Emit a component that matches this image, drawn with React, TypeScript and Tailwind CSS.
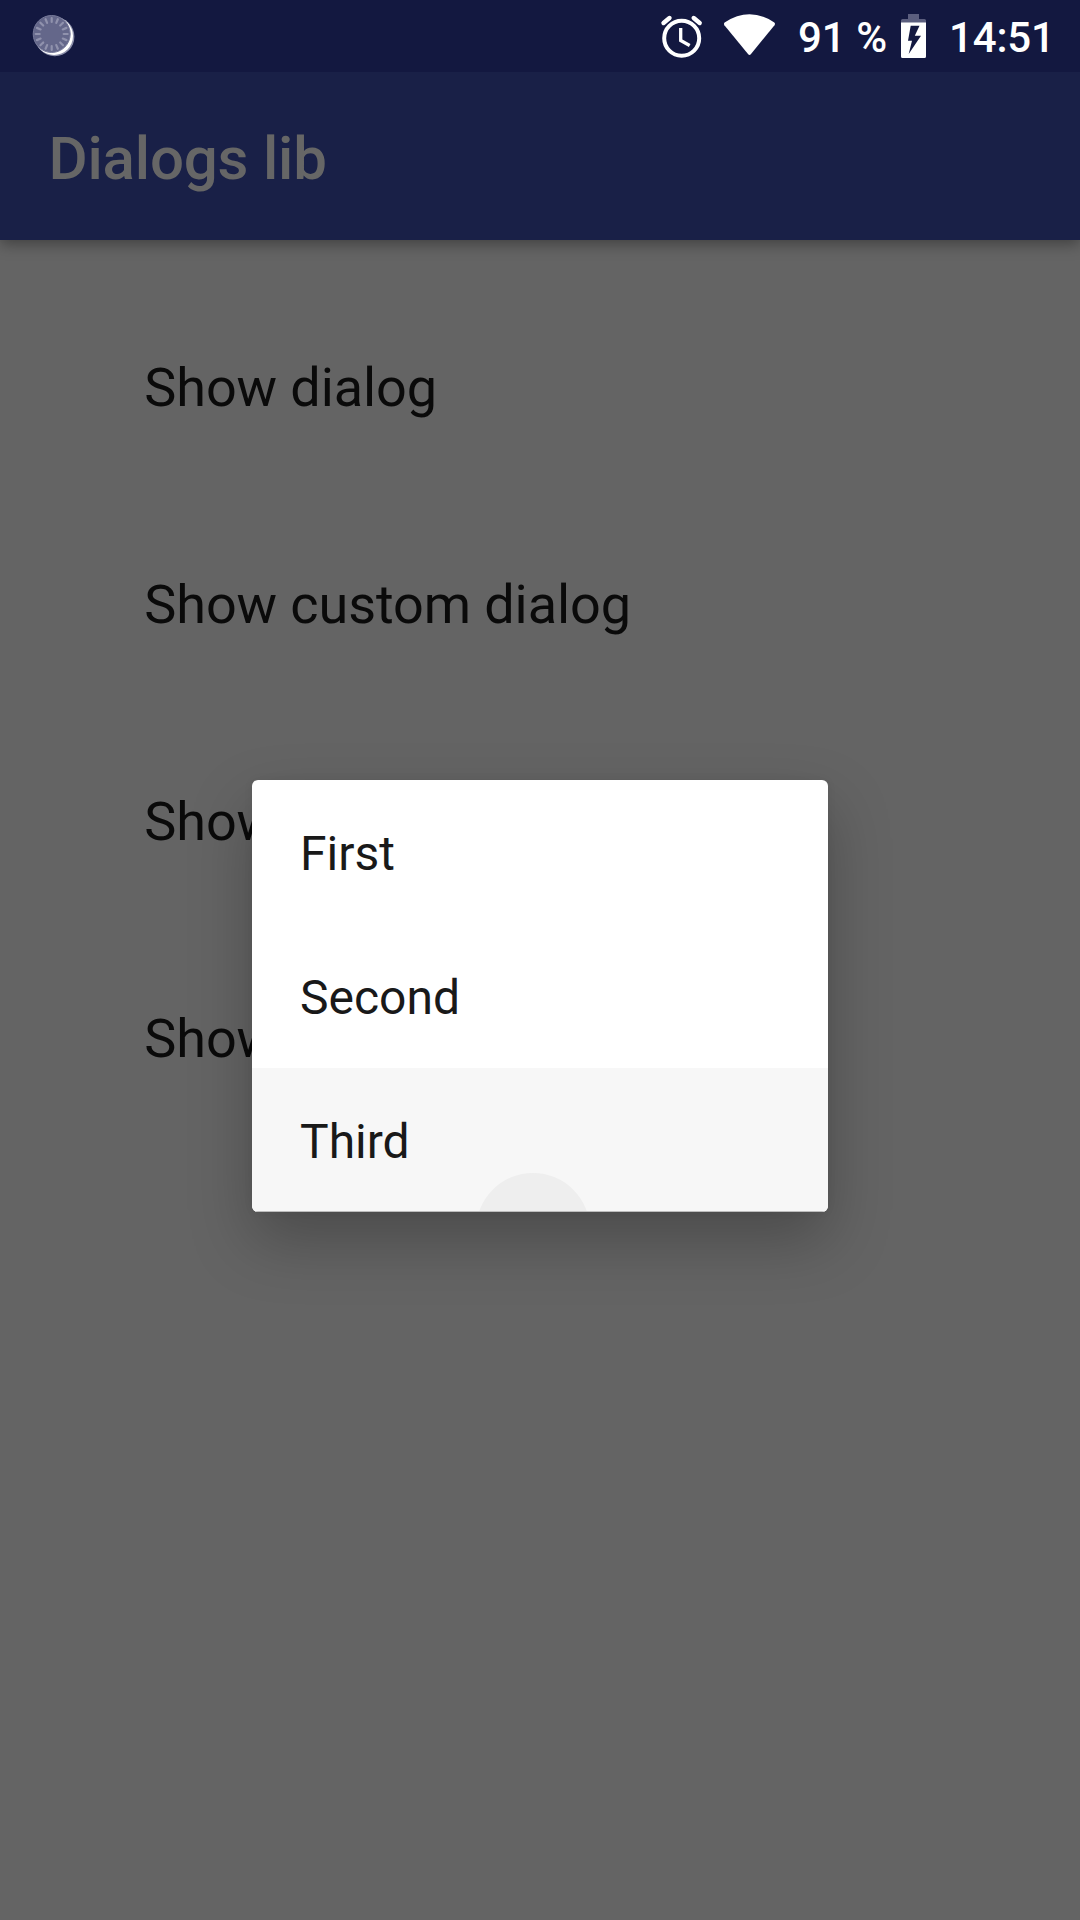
const ticks = Array.from({ length: 16 }, (_, i) => i * 22.5);
const actions = ["Show dialog", "Show custom dialog", "Show", "Show"];

function SyncIcon() {
  return (
    <svg className="ml-8 h-[72px] w-12 shrink-0" viewBox="32 0 48 72">
      <circle cx="54.8" cy="36.7" r="19.6" fill="#8d90ab" />
      <circle cx="54" cy="36" r="19" fill="#fff" />
      <circle cx="51.7" cy="34" r="18.5" fill="#64678a" stroke="#777a9a" />
      {ticks.map((a) => (
        <path key={a} d="M51.7 18v4" stroke="#9092ad" strokeWidth="2.2" strokeLinecap="round" transform={`rotate(${a} 51.7 34)`} />
      ))}
    </svg>
  );
}

function StatusIcons() {
  return (
    <svg className="h-[72px] w-[125px] shrink-0" viewBox="655 0 125 72">
      <circle cx="681.7" cy="38.3" r="17.5" fill="none" stroke="#fff" strokeWidth="4" />
      <path d="M663.5 23l6-5M693.7 18l6 5" stroke="#fff" strokeWidth="4.4" strokeLinecap="round" />
      <path d="M680.7 28v12.5l9 5" fill="none" stroke="#fff" strokeWidth="3.3" />
      <path d="M724.6 22.4Q749.5 6 774.3 22.4Q775.6 23.5 774.5 25.2L751 54Q749.5 55.8 748 54L724.4 25.2Q723.4 23.5 724.6 22.4Z" fill="#fff" />
    </svg>
  );
}

function BatteryIcon() {
  return (
    <svg className="h-[72px] w-[26px] shrink-0" viewBox="901 0 26 72">
      <path d="M908 14h11v5h5.5q1.5 0 1.5 1.5V23h-25v-2.500q0-1.500 1.500-1.500H908z" fill="#5b5e7e" />
      <path fillRule="evenodd" d="M901 22.500h25V56.500q0 1.500-1.500 1.500h-22q-1.500 0-1.500-1.500zM910.7 25.700L908 40.700h4l-3.300 13.300L921 35.700h-6.200l4.700-10z" fill="#fff" />
    </svg>
  );
}

export default function App() {
  return (
    <div className="relative h-[1920px] w-[1080px] overflow-hidden bg-[#646464] font-[Roboto,sans-serif]">
      <header className="relative flex h-60 flex-col bg-[#192047] shadow-[0_4px_14px_rgba(0,0,0,0.36)]">
        <div className="flex h-[72px] items-center bg-[#131840] text-[42px] leading-[72px] font-medium text-white">
          <SyncIcon />
          <div className="ml-[575px] flex">
            <StatusIcons />
          </div>
          <span className="ml-[18px] w-[103px] pt-1 whitespace-nowrap">91 %</span>
          <BatteryIcon />
          <span className="ml-[22px] pt-1 tracking-[-0.15px] whitespace-nowrap">14:51</span>
        </div>
        <h1 className="flex h-[168px] items-center pt-1.5 pl-[48.5px] text-[60px] font-medium tracking-[-0.18px] text-[#666666]">Dialogs lib</h1>
      </header>
      <main className="flex flex-col pt-[39px] pl-[144.3px]">
        {actions.map((label, i) => (
          <button key={i} className="flex h-[217px] items-center text-left text-[54px] tracking-[-0.1px] whitespace-nowrap text-[#0a0a0a]">
            {label}
          </button>
        ))}
      </main>
      <div role="dialog" className="absolute top-[780px] left-[252px] w-[576px] rounded-md shadow-[0_28px_62px_rgba(0,0,0,0.25),0_0_10px_rgba(0,0,0,0.06)]">
        <ul className="overflow-hidden rounded-md bg-white text-5xl text-[#191919]">
          <li className="flex h-36 items-center pt-1 pl-12">First</li>
          <li className="flex h-36 items-center pt-1 pl-12">Second</li>
          <li className="relative flex h-36 items-center overflow-hidden border-b border-[#bdbdbd] bg-[#f7f7f7] pt-1 pl-12">
            <span className="absolute top-[105px] left-[223.5px] h-[114px] w-[114px] rounded-full bg-[#eeeeee]" />
            <span className="relative">Third</span>
          </li>
        </ul>
      </div>
    </div>
  );
}
